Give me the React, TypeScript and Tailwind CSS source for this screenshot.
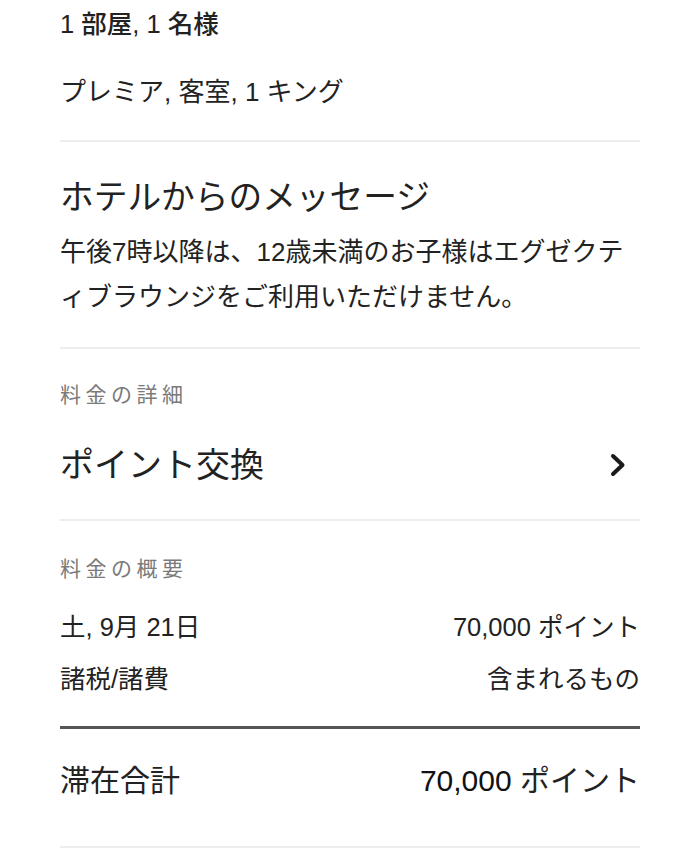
import React from "react";

const FONT = { fontFamily: '"Liberation Sans", "Noto Sans CJK JP", sans-serif' };

function Divider() {
    return <div className="h-[2px] bg-[#ededed]" />;
}

function Chevron() {
    return (
        <svg width="16" height="24" viewBox="0 0 16 24" className="text-[#1a1a1a]">
            <polyline
                points="3,3 12.5,12 3,21"
                fill="none"
                stroke="currentColor"
                strokeWidth="4"
                strokeLinecap="round"
                strokeLinejoin="round"
            />
        </svg>
    );
}

export default function App() {
    return (
        <div className="w-[700px] h-[857px] bg-white overflow-hidden px-[60px] text-[#222]" style={FONT}>
            {/* Room summary */}
            <div className="pt-[5px] pb-[29px]">
                <p className="text-[25.5px] leading-[38px] font-medium">1 部屋, 1 名様</p>
                <p className="mt-[30px] text-[26px] leading-[38px]">プレミア, 客室, 1 キング</p>
            </div>
            <Divider />

            {/* Hotel message */}
            <div className="pt-[33px] pb-[27px]">
                <h2 className="text-[33.7px] leading-[44px]">ホテルからのメッセージ</h2>
                <p className="mt-[11px] text-[26px] leading-[45px]">
                    午後7時以降は、12歳未満のお子様はエグゼクテ
                    <br />
                    ィブラウンジをご利用いただけません。
                </p>
            </div>
            <Divider />

            {/* Rate details */}
            <div className="pt-[32px] pb-[32px]">
                <p className="text-[21px] leading-[28px] tracking-[4.5px] text-[#7a7a7a]">料金の詳細</p>
                <div className="mt-[34px] flex items-center justify-between">
                    <span className="text-[34px] leading-[44px]">ポイント交換</span>
                    <div className="pr-[14px]">
                        <Chevron />
                    </div>
                </div>
            </div>
            <Divider />

            {/* Rate summary */}
            <div className="pt-[34px] pb-[28px]">
                <p className="text-[21px] leading-[28px] tracking-[4.5px] text-[#7a7a7a]">料金の概要</p>
                <div className="mt-[25px] flex justify-between text-[25.5px] leading-[38px]">
                    <span>土, 9月 21日</span>
                    <span>70,000 ポイント</span>
                </div>
                <div className="mt-[14px] flex justify-between text-[25.5px] leading-[38px]">
                    <span>諸税/諸費</span>
                    <span>含まれるもの</span>
                </div>
            </div>
            <div className="h-[3px] bg-[#555]" />

            {/* Total */}
            <div className="pt-[32px] pb-[45px] flex justify-between text-[30px] leading-[40px]">
                <span>滞在合計</span>
                <span>
                    <span className="text-[#111]">70,000</span> ポイント
                </span>
            </div>
            <Divider />
        </div>
    );
}
